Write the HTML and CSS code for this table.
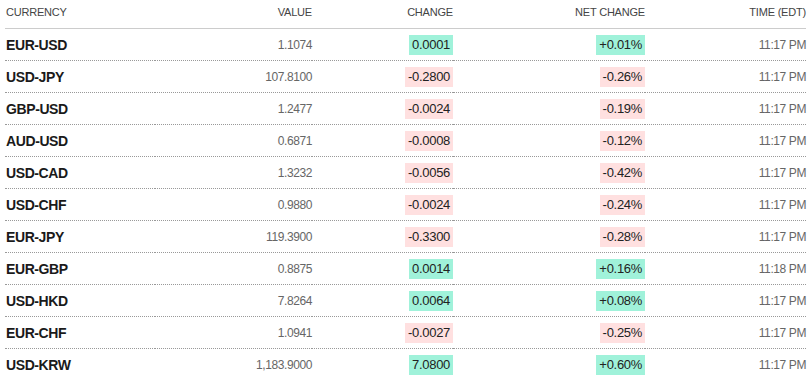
FILE: index.html
```html
<!DOCTYPE html>
<html lang="en">
<head>
    <meta charset="UTF-8">
    <meta name="viewport" content="width=device-width, initial-scale=1.0">
    <title>Currencies</title>
    <link rel="stylesheet" href="styles.css">
</head>
<body>
    <div class="container">
        <table class="quotes">
            <colgroup>
                <col class="col-name">
                <col class="col-value">
                <col class="col-change">
                <col class="col-net">
                <col class="col-time">
            </colgroup>
            <thead>
                <tr>
                    <th class="left">Currency</th>
                    <th>Value</th>
                    <th>Change</th>
                    <th>Net Change</th>
                    <th>Time (EDT)</th>
                </tr>
            </thead>
            <tbody>
                <tr>
                    <td class="name">EUR-USD</td>
                    <td class="value">1.1074</td>
                    <td><span class="badge up">0.0001</span></td>
                    <td><span class="badge up">+0.01%</span></td>
                    <td class="time">11:17 PM</td>
                </tr>
                <tr>
                    <td class="name">USD-JPY</td>
                    <td class="value">107.8100</td>
                    <td><span class="badge down">-0.2800</span></td>
                    <td><span class="badge down">-0.26%</span></td>
                    <td class="time">11:17 PM</td>
                </tr>
                <tr>
                    <td class="name">GBP-USD</td>
                    <td class="value">1.2477</td>
                    <td><span class="badge down">-0.0024</span></td>
                    <td><span class="badge down">-0.19%</span></td>
                    <td class="time">11:17 PM</td>
                </tr>
                <tr>
                    <td class="name">AUD-USD</td>
                    <td class="value">0.6871</td>
                    <td><span class="badge down">-0.0008</span></td>
                    <td><span class="badge down">-0.12%</span></td>
                    <td class="time">11:17 PM</td>
                </tr>
                <tr>
                    <td class="name">USD-CAD</td>
                    <td class="value">1.3232</td>
                    <td><span class="badge down">-0.0056</span></td>
                    <td><span class="badge down">-0.42%</span></td>
                    <td class="time">11:17 PM</td>
                </tr>
                <tr>
                    <td class="name">USD-CHF</td>
                    <td class="value">0.9880</td>
                    <td><span class="badge down">-0.0024</span></td>
                    <td><span class="badge down">-0.24%</span></td>
                    <td class="time">11:17 PM</td>
                </tr>
                <tr>
                    <td class="name">EUR-JPY</td>
                    <td class="value">119.3900</td>
                    <td><span class="badge down">-0.3300</span></td>
                    <td><span class="badge down">-0.28%</span></td>
                    <td class="time">11:17 PM</td>
                </tr>
                <tr>
                    <td class="name">EUR-GBP</td>
                    <td class="value">0.8875</td>
                    <td><span class="badge up">0.0014</span></td>
                    <td><span class="badge up">+0.16%</span></td>
                    <td class="time">11:18 PM</td>
                </tr>
                <tr>
                    <td class="name">USD-HKD</td>
                    <td class="value">7.8264</td>
                    <td><span class="badge up">0.0064</span></td>
                    <td><span class="badge up">+0.08%</span></td>
                    <td class="time">11:17 PM</td>
                </tr>
                <tr>
                    <td class="name">EUR-CHF</td>
                    <td class="value">1.0941</td>
                    <td><span class="badge down">-0.0027</span></td>
                    <td><span class="badge down">-0.25%</span></td>
                    <td class="time">11:17 PM</td>
                </tr>
                <tr>
                    <td class="name">USD-KRW</td>
                    <td class="value">1,183.9000</td>
                    <td><span class="badge up">7.0800</span></td>
                    <td><span class="badge up">+0.60%</span></td>
                    <td class="time">11:17 PM</td>
                </tr>
            </tbody>
        </table>
    </div>
</body>
</html>
```

FILE: styles.css
```css
* {
    margin: 0;
    padding: 0;
    box-sizing: border-box;
}

body {
    font-family: 'Liberation Sans', Arial, Helvetica, sans-serif;
    background: #fff;
    color: #222;
}

.container {
    padding: 0 6px 0 5px;
}

.quotes {
    width: 100%;
    border-spacing: 0;
    table-layout: fixed;
}

.col-name { width: 150px; }
.col-value { width: 157px; }
.col-change { width: 141px; }
.col-net { width: 192px; }
.col-time { width: 161px; }

.quotes th {
    height: 29px;
    padding: 0 0 4px;
    font-size: 11px;
    font-weight: normal;
    text-transform: uppercase;
    letter-spacing: -0.2px;
    color: #444;
    text-align: right;
    vertical-align: middle;
    border-bottom: 1px solid #ccc;
}

.quotes th.left {
    text-align: left;
    padding-left: 1px;
}

.quotes td {
    height: 32px;
    padding: 0;
    text-align: right;
    vertical-align: middle;
    border-bottom: 1px dotted #999;
    font-size: 12px;
}

.quotes td.name {
    text-align: left;
    padding-left: 1px;
    font-size: 14px;
    font-weight: bold;
    letter-spacing: -0.4px;
    color: #1a1a1a;
}

.quotes td.value,
.quotes td.time {
    color: #666;
    letter-spacing: -0.4px;
}

.badge {
    display: inline-block;
    padding: 2px 3px;
    line-height: 16px;
    font-size: 13px;
    letter-spacing: -0.3px;
    color: #222;
}

.badge.up {
    background: #a0f2da;
}

.badge.down {
    background: #ffe0e0;
}
```
